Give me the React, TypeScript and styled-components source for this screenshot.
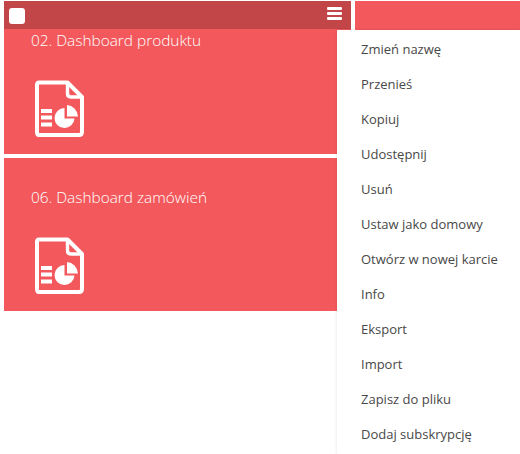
import React from "react";
import styled, { createGlobalStyle } from "styled-components";

const Global = createGlobalStyle`
  html, body { margin: 0; padding: 0; background: #fff; overflow: hidden; }
  body { font-family: "Open Sans", "Liberation Sans", sans-serif; }
`;

const Page = styled.div`
  position: relative;
  width: 520px;
  height: 454px;
  overflow: hidden;
  padding: 1px 0 0 4px;
  box-sizing: border-box;
  display: grid;
  grid-template-columns: 347px 347px;
  grid-auto-rows: 153px;
  gap: 4px;
`;

const Card = styled.div`
  position: relative;
  background: #f3595c;
  padding: 28px 27px 0;
  box-sizing: border-box;
  color: #fff;
`;

const Title = styled.div`
  font-size: 15.4px;
  font-weight: 300;
  line-height: 24px;
  height: 51px;
  white-space: nowrap;
`;

const CardIcon = styled.svg`
  display: block;
  margin-left: 3px;
  width: 50px;
  height: 58px;
`;

const Toolbar = styled.div`
  position: absolute;
  left: 0;
  top: 0;
  right: 0;
  height: 28px;
  background: #c24547;
  display: flex;
  align-items: center;
  justify-content: space-between;
  padding: 0 9px 0 5px;
  box-sizing: border-box;
`;

const Check = styled.span`
  width: 16px;
  height: 16px;
  margin-top: 2px;
  background: #fff;
  border-radius: 3px;
`;

const Burger = styled.span`
  display: flex;
  flex-direction: column;
  gap: 2px;
  margin-top: -3px;
  width: 15px;
`;

const BurgerBar = styled.span`
  display: block;
  height: 3px;
  background: #fff;
  border-radius: 1px;
`;

const Menu = styled.ul`
  position: absolute;
  left: 337px;
  top: 30px;
  width: 183px;
  height: 424px;
  margin: 0;
  padding: 2px 0 0;
  box-sizing: border-box;
  list-style: none;
  background: #fff;
  box-shadow: 0 0 3px rgba(0, 0, 0, 0.12);
`;

const MenuItem = styled.li`
  height: 35px;
  line-height: 35px;
  padding-left: 24px;
  font-size: 13px;
  color: #484848;
  white-space: nowrap;
`;

const DocIcon = () => (
  <CardIcon viewBox="0 0 50 58" fill="none">
    <path
      d="M5 2.5 H33.5 L48 17 V52 Q48 55 45 55 H5 Q3 55 3 52 V5 Q3 2.5 5 2.5 Z"
      stroke="#fff"
      strokeWidth="4"
      strokeLinejoin="round"
    />
    <path d="M33.5 2.5 V13.5 Q33.5 17 37 17 H48" stroke="#fff" strokeWidth="3.4" strokeLinejoin="round" />
    <path d="M7 31 H18 M7 37.5 H18 M7 44.5 H18" stroke="#fff" strokeWidth="3.8" />
    <path d="M30.5 28 A10 10 0 1 0 40.5 38.5 H30.5 Z" fill="#fff" />
    <path d="M33 25 A12 12 0 0 1 44 36.5 H33 Z" fill="#fff" />
  </CardIcon>
);

const items = [
  "Zmień nazwę",
  "Przenieś",
  "Kopiuj",
  "Udostępnij",
  "Usuń",
  "Ustaw jako domowy",
  "Otwórz w nowej karcie",
  "Info",
  "Eksport",
  "Import",
  "Zapisz do pliku",
  "Dodaj subskrypcję",
];

export default function App() {
  return (
    <Page>
      <Global />
      <Card>
        <Toolbar>
          <Check />
          <Burger>
            <BurgerBar />
            <BurgerBar />
            <BurgerBar />
          </Burger>
        </Toolbar>
        <Title>02. Dashboard produktu</Title>
        <DocIcon />
      </Card>
      <Card />
      <Card>
        <Title>06. Dashboard zamówień</Title>
        <DocIcon />
      </Card>
      <Menu>
        {items.map((t) => (
          <MenuItem key={t}>{t}</MenuItem>
        ))}
      </Menu>
    </Page>
  );
}
